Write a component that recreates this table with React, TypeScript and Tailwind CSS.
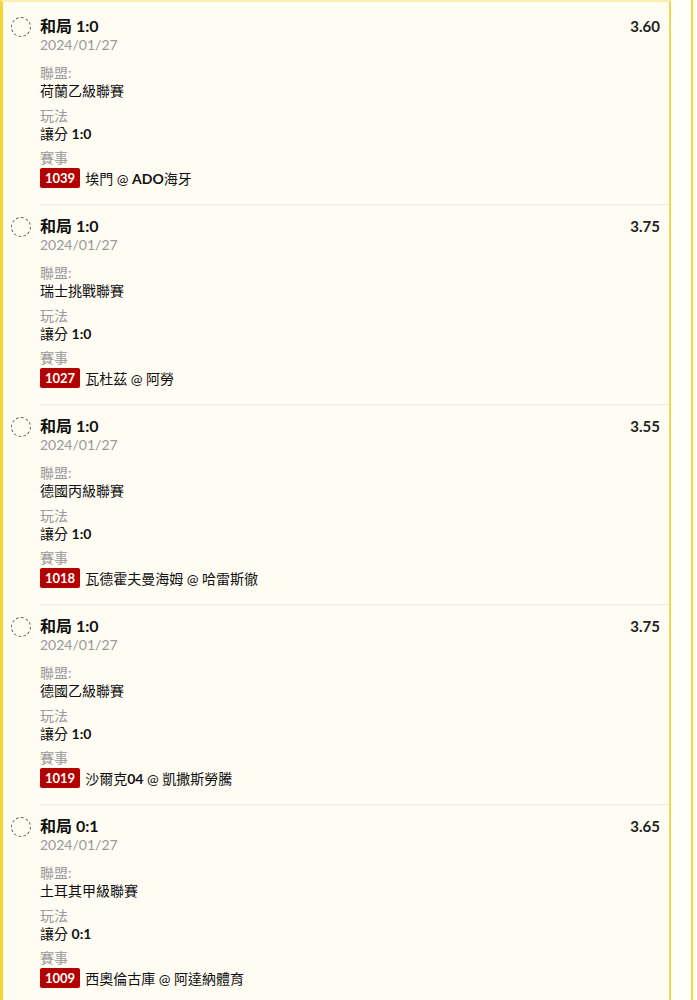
import React from 'react';

interface Bet {
  pick: string;
  date: string;
  league: string;
  play: string;
  code: string;
  match: string;
  odds: string;
}

const bets: Bet[] = [
  { pick: '和局 1:0', date: '2024/01/27', league: '荷蘭乙級聯賽', play: '讓分 1:0', code: '1039', match: '埃門 @ ADO海牙', odds: '3.60' },
  { pick: '和局 1:0', date: '2024/01/27', league: '瑞士挑戰聯賽', play: '讓分 1:0', code: '1027', match: '瓦杜茲 @ 阿勞', odds: '3.75' },
  { pick: '和局 1:0', date: '2024/01/27', league: '德國丙級聯賽', play: '讓分 1:0', code: '1018', match: '瓦德霍夫曼海姆 @ 哈雷斯徹', odds: '3.55' },
  { pick: '和局 1:0', date: '2024/01/27', league: '德國乙級聯賽', play: '讓分 1:0', code: '1019', match: '沙爾克04 @ 凱撒斯勞騰', odds: '3.75' },
  { pick: '和局 0:1', date: '2024/01/27', league: '土耳其甲級聯賽', play: '讓分 0:1', code: '1009', match: '西奧倫古庫 @ 阿達納體育', odds: '3.65' },
];

// latin runs get the heavier weight, CJK stays regular
function Mixed({ text }: { text: string }) {
  const parts = text.split(/([A-Za-z0-9:.]+)/);
  return (
    <>
      {parts.map((p, i) =>
        /^[A-Za-z0-9:.]+$/.test(p) ? (
          <span key={i} className="font-bold">{p}</span>
        ) : (
          <span key={i}>{p}</span>
        )
      )}
    </>
  );
}

function BetRow({ bet, last }: { bet: Bet; last: boolean }) {
  return (
    <div className="flex">
      <div className="w-[37px] shrink-0 pl-[8px] pt-[11px]">
        <div className="mt-[1px] h-[20px] w-[20px] rounded-full border border-dashed border-[#555]" />
      </div>
      <div className={`flex-1 pt-[11px] pb-[15px] pr-[9px] ${last ? '' : 'border-b border-[#e9e7e0]'}`}>
        <div className="flex items-start justify-between">
          <div className="text-[16px] leading-[20px] font-bold text-[#111]">{bet.pick}</div>
          <div className="text-[15px] leading-[20px] font-bold text-[#222]">{bet.odds}</div>
        </div>
        <div className="text-[14px] leading-[17px] text-[#999]">{bet.date}</div>

        <div className="mt-[11px] text-[14px] leading-[18px] text-[#999]">聯盟:</div>
        <div className="text-[14px] leading-[18px] text-[#111]">{bet.league}</div>

        <div className="mt-[7px] text-[14px] leading-[18px] text-[#999]">玩法</div>
        <div className="text-[14px] leading-[18px] text-[#111]">
          <Mixed text={bet.play} />
        </div>

        <div className="mt-[6px] text-[14px] leading-[18px] text-[#999]">賽事</div>
        <div className="flex h-[22px] items-center gap-[5px] text-[14px] text-[#111]">
          <span className="rounded-[2px] bg-[#b30000] px-[5px] text-[13px] leading-[20px] font-bold text-white">
            {bet.code}
          </span>
          <span>
            <Mixed text={bet.match} />
          </span>
        </div>
      </div>
    </div>
  );
}

export default function App() {
  return (
    <div
      className="flex min-h-[1000px] w-[697px] bg-[#fffff6]"
      style={{ fontFamily: "Lato, 'Noto Sans CJK TC', 'Noto Sans', sans-serif" }}
    >
      <div className="w-[671px] shrink-0 border-t-2 border-l-[3px] border-r-2 border-t-[#fbefb0] border-l-[#f6d632] border-r-[#f2d64c] bg-[#fefcf3] pt-[3px]">
        {bets.map((b, i) => (
          <BetRow key={i} bet={b} last={i === bets.length - 1} />
        ))}
      </div>
      <div className="w-[20px] shrink-0 bg-[#fffffa]" />
      <div className="w-[2px] shrink-0 bg-[#f2d64c]" />
    </div>
  );
}
